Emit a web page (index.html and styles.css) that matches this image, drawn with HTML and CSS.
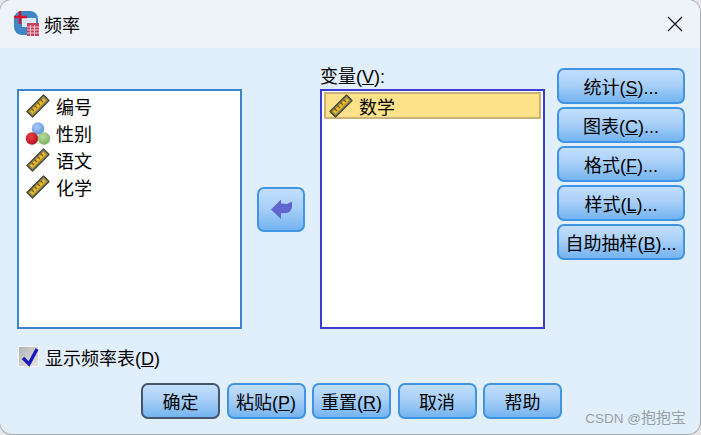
FILE: index.html
```html
<!DOCTYPE html>
<html>
  <head>
    <title>频率</title>
    <meta charset="UTF-8">
    <link rel="stylesheet" href="styles.css">
  </head>
  <body>
    <svg class="defs" width="0" height="0">
      <defs>
        <radialGradient id="ball-blue" cx="0.4" cy="0.35" r="0.7">
          <stop offset="0" stop-color="#a9ccf5"/>
          <stop offset="1" stop-color="#5f93dc"/>
        </radialGradient>
        <radialGradient id="ball-red" cx="0.4" cy="0.35" r="0.7">
          <stop offset="0" stop-color="#e8404c"/>
          <stop offset="1" stop-color="#b3121f"/>
        </radialGradient>
        <radialGradient id="ball-green" cx="0.4" cy="0.35" r="0.7">
          <stop offset="0" stop-color="#b9dc9c"/>
          <stop offset="1" stop-color="#7aae5e"/>
        </radialGradient>
      </defs>
      <symbol id="ruler" viewBox="0 0 26 26">
        <path d="M2 18.5 L18.5 2 L24 7.5 L7.5 24 Z" fill="#8f8c66" stroke="#4a4730" stroke-width="1.4" stroke-linejoin="round"/>
        <path d="M5 18.5 L18.5 5 L21 7.5 L7.5 21 Z" fill="#f4b90f"/>
        <path d="M6.5 15.5 l2.5 2.5 M9.5 12.5 l2.5 2.5 M12.5 9.5 l2.5 2.5 M15.5 6.5 l2.5 2.5" stroke="#6b5a1c" stroke-width="1.1"/>
      </symbol>
      <symbol id="balls" viewBox="0 0 26 26">
        <circle cx="13" cy="8.5" r="6.2" fill="url(#ball-blue)"/>
        <circle cx="7" cy="18.5" r="6.2" fill="url(#ball-red)"/>
        <circle cx="19" cy="18.5" r="6.2" fill="url(#ball-green)"/>
      </symbol>
    </svg>

    <div class="window">
      <div class="titlebar">
        <svg class="app-icon" width="26" height="26" viewBox="0 0 26 26">
          <rect x="1" y="0" width="24" height="24" rx="8" fill="#3f86c6"/>
          <rect x="9" y="7" width="14" height="9" fill="#d9e8f5"/>
          <path d="M7 0 V13 M1 6 H14" stroke="#d3162c" stroke-width="2.6"/>
          <rect x="14" y="12" width="12" height="13" fill="#c9415f"/>
          <path d="M14 16 H26 M14 19 H26 M14 22 H26 M17.5 14 V25 M21.5 14 V25" stroke="#f3c3cf" stroke-width="1"/>
        </svg>
        <span class="title">频率</span>
        <svg class="close" width="16" height="16" viewBox="0 0 16 16">
          <path d="M1 1 L15 15 M15 1 L1 15" stroke="#111" stroke-width="1.2"/>
        </svg>
      </div>

      <div class="content">
        <div class="columns">
          <ul class="list source">
            <li><svg class="var-icon"><use href="#ruler"/></svg>编号</li>
            <li><svg class="var-icon"><use href="#balls"/></svg>性别</li>
            <li><svg class="var-icon"><use href="#ruler"/></svg>语文</li>
            <li><svg class="var-icon"><use href="#ruler"/></svg>化学</li>
          </ul>

          <button class="btn arrow-btn" type="button">
            <svg width="22" height="20" viewBox="0 0 22 20">
              <path d="M1 10.5 L11 0.5 V4.5 L17 5 L22 2.5 V8 Q21 13 17 14 H11 V20 Z" fill="#5f66cf"/>
            </svg>
          </button>

          <label class="target-label">变量(<u>V</u>):</label>
          <ul class="list target">
            <li class="selected"><svg class="var-icon"><use href="#ruler"/></svg>数学</li>
          </ul>

          <div class="side-buttons">
            <button class="btn" type="button">统计(<u>S</u>)...</button>
            <button class="btn" type="button">图表(<u>C</u>)...</button>
            <button class="btn" type="button">格式(<u>F</u>)...</button>
            <button class="btn" type="button">样式(<u>L</u>)...</button>
            <button class="btn" type="button">自助抽样(<u>B</u>)...</button>
          </div>
        </div>

        <div class="check-row">
          <span class="checkbox">
            <svg width="21" height="21" viewBox="0 0 21 21">
              <path d="M5 12 L11 18 L19 3" fill="none" stroke="#1a1ab8" stroke-width="3.4"/>
            </svg>
          </span>
          <span>显示频率表(<u>D</u>)</span>
        </div>

        <div class="bottom-buttons">
          <button class="btn default" type="button">确定</button>
          <button class="btn" type="button">粘贴(<u>P</u>)</button>
          <button class="btn" type="button">重置(<u>R</u>)</button>
          <button class="btn" type="button">取消</button>
          <button class="btn" type="button">帮助</button>
        </div>
      </div>

      <div class="watermark">CSDN @<span class="watermark-name">抱抱宝</span></div>
    </div>
  </body>
</html>
```

FILE: styles.css
```css
html, body {
  margin: 0;
  padding: 0;
}
body {
  width: 701px;
  height: 435px;
  overflow: hidden;
  background-color: #e4e6e8;
  font-family: "Liberation Sans", "Noto Sans CJK SC", sans-serif;
  font-size: 18px;
  color: #000;
}
.defs {
  position: absolute;
}
.window {
  position: relative;
  width: 700px;
  height: 434px;
  border-radius: 12px;
  overflow: hidden;
  background-color: #e1eefb;
  box-shadow: 0 0 0 1px #a9aaab;
}
.titlebar {
  display: flex;
  align-items: center;
  height: 48px;
  padding: 0 17px 0 13px;
  background-color: #eef3f9;
}
.title {
  margin-left: 5px;
}
.close {
  margin-left: auto;
}
.content {
  padding: 20px 0 0 17px;
}
.columns {
  display: grid;
  grid-template-columns: 225px 78px 225px 140px;
  grid-template-rows: 21px 240px;
}
.list {
  margin: 0;
  padding: 1px 2px;
  list-style: none;
  background-color: #fff;
  border: 2px solid #3b85cf;
  box-sizing: border-box;
}
.source {
  grid-column: 1;
  grid-row: 2;
  padding: 1px 3px;
}
.source li {
  padding-left: 3px;
}
.target {
  grid-column: 3;
  grid-row: 2;
  border-color: #3b3bcf;
}
.list li {
  display: flex;
  align-items: center;
  height: 27px;
  gap: 5px;
}
.list li.selected {
  box-sizing: border-box;
  background-color: #fde28a;
  border: 2px solid #c8b478;
  padding-left: 2px;
  gap: 5px;
}
.var-icon {
  width: 26px;
  height: 26px;
}
.target-label {
  grid-column: 3;
  grid-row: 1;
  line-height: 19px;
}
.btn {
  box-sizing: border-box;
  padding: 0;
  font-family: inherit;
  font-size: 18px;
  color: #000;
  border: 2px solid #3f94e4;
  border-radius: 7px;
  background: linear-gradient(to bottom, #c3defc, #a9d0f8 45%, #74b4f0);
}
.arrow-btn {
  grid-column: 2;
  grid-row: 2;
  align-self: center;
  justify-self: center;
  display: flex;
  align-items: center;
  justify-content: center;
  width: 48px;
  height: 45px;
}
.side-buttons {
  grid-column: 4;
  grid-row: 1 / 3;
  justify-self: end;
  width: 128px;
  display: flex;
  flex-direction: column;
  gap: 3px;
}
.side-buttons .btn {
  height: 36px;
}
.check-row {
  display: flex;
  align-items: center;
  gap: 6px;
  height: 21px;
  margin: 17px 0 0 1px;
}
.checkbox {
  display: block;
  width: 21px;
  height: 21px;
  background: linear-gradient(135deg, #b4b4b4, #e4e4e4);
  border: 1px solid #f6f6f6;
  box-sizing: border-box;
}
.checkbox svg {
  display: block;
  margin: -1px;
}
.bottom-buttons {
  display: flex;
  gap: 6.5px;
  margin: 16px 0 0 124px;
}
.bottom-buttons .btn {
  width: 79px;
  height: 36px;
}
.btn.default {
  border-color: #46566a;
}
.watermark {
  position: absolute;
  right: 14px;
  bottom: 5px;
  font-size: 13.5px;
  line-height: 20px;
  color: #9a9ea5;
}
.watermark-name {
  font-size: 15px;
}
```
